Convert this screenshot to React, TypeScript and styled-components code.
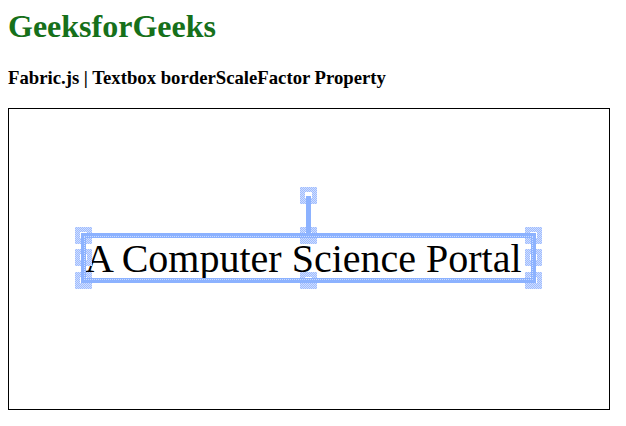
import React from "react";
import styled, { createGlobalStyle } from "styled-components";

const GlobalStyle = createGlobalStyle`
  html, body { margin: 0; padding: 0; background: #ffffff; }
  body { font-family: "Liberation Serif", "Times New Roman", serif; }
`;

const Page = styled.div`
  padding: 8px;
  display: flex;
  flex-direction: column;
  align-items: flex-start;
`;

const Title = styled.h1`
  margin: 0;
  font-family: "Liberation Serif", "Times New Roman", serif;
  font-size: 32px;
  line-height: 37px;
  font-weight: bold;
  color: #16701a;
`;

const Subtitle = styled.h3`
  margin: 21.5px 0 19.5px;
  font-family: "Liberation Serif", "Times New Roman", serif;
  font-size: 18.72px;
  line-height: 22px;
  font-weight: bold;
  color: #000;
`;

const Canvas = styled.div`
  position: relative;
  width: 600px;
  height: 300px;
  border: 1px solid #000;
  overflow: hidden;
`;

const TextItem = styled.span`
  position: absolute;
  left: 76px;
  top: 126.5px;
  font-family: "Liberation Serif", "Times New Roman", serif;
  font-size: 40px;
  line-height: 46px;
  white-space: nowrap;
  color: #000;
`;

const Handle = styled.div<{ $x: number; $y: number }>`
  position: absolute;
  left: ${(p) => p.$x}px;
  top: ${(p) => p.$y}px;
  width: 17px;
  height: 17px;
  background: repeating-conic-gradient(#9fbcff 0 25%, #cfdeff 0 50%) 0 0 / 2px 2px;
  &::after {
    content: "";
    position: absolute;
    left: 5px;
    top: 5px;
    width: 7px;
    height: 6px;
    background: #ffffff;
  }
`;

const Border = styled.div`
  position: absolute;
  left: 72px;
  top: 124px;
  width: 455px;
  height: 50px;
  box-sizing: border-box;
  border: 5px solid #8cb2ff;
  &::after {
    content: "";
    position: absolute;
    inset: -2px;
    border: 1px dotted rgba(255, 255, 255, 0.55);
  }
`;

const Connector = styled.div`
  position: absolute;
  left: 297px;
  top: 87px;
  width: 5px;
  height: 37px;
  background: #8cb2ff;
`;

const cols = [66, 291, 516];
const rows = [118, 140, 163];

export default function App() {
  const handles: { x: number; y: number }[] = [];
  rows.forEach((y, ri) =>
    cols.forEach((x, ci) => {
      if (ri === 1 && ci === 1) return;
      handles.push({ x, y });
    })
  );
  return (
    <>
      <GlobalStyle />
      <Page>
        <Title>GeeksforGeeks</Title>
        <Subtitle>Fabric.js | Textbox borderScaleFactor Property</Subtitle>
        <Canvas>
          <TextItem>A Computer Science Portal</TextItem>
          <Handle $x={291} $y={78} />
          {handles.map((h, i) => (
            <Handle key={i} $x={h.x} $y={h.y} />
          ))}
          <Connector />
          <Border />
        </Canvas>
      </Page>
    </>
  );
}
